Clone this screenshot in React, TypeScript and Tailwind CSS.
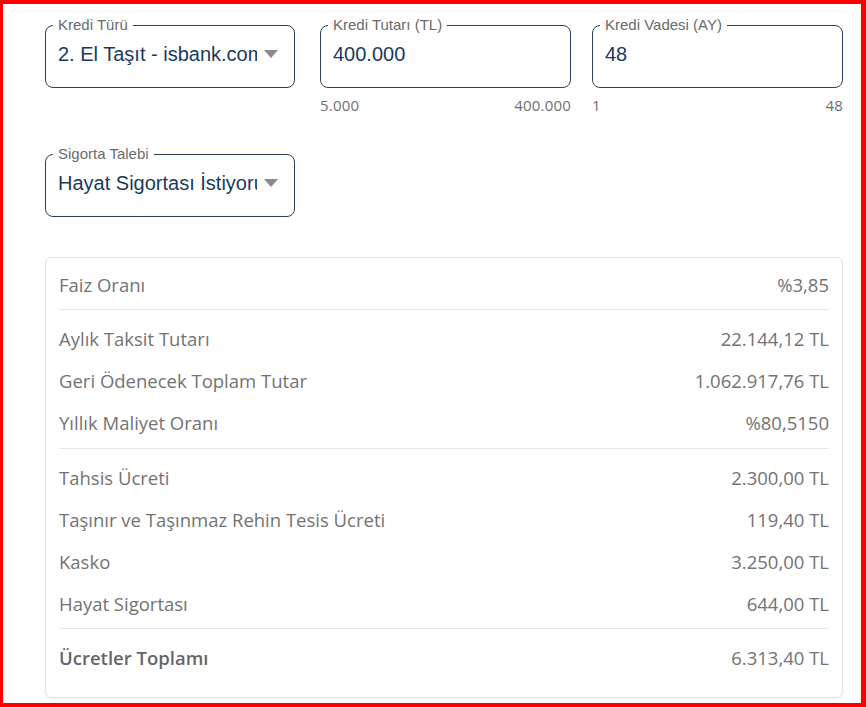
import React from 'react';

const inputFont = { fontFamily: '"Liberation Sans", Arial, sans-serif' };

function Field({
  label,
  value,
  select,
  className = '',
}: {
  label: string;
  value: string;
  select?: boolean;
  className?: string;
}) {
  return (
    <div
      className={`relative h-[63px] rounded-[8px] border border-[#2b4058] bg-white ${className}`}
    >
      <span className="absolute -top-[10px] left-[7px] bg-white px-[5px] text-[15px] leading-[18px] text-[#6b6b6b]">
        {label}
      </span>
      <div className="flex h-full items-start pt-[16px] pl-[12px] pr-[16px]">
        <span className="min-w-0 flex-1 overflow-hidden whitespace-nowrap text-[20px] leading-[24px] text-[#1b3a5e]">
          {value}
        </span>
        {select && (
          <svg
            width="14"
            height="8"
            viewBox="0 0 14 8"
            className="mt-[8px] ml-[7px] shrink-0"
          >
            <path d="M0 0 L14 0 L7 8 Z" fill="#8a8a8a" />
          </svg>
        )}
      </div>
    </div>
  );
}

function Range({ min, max }: { min: string; max: string }) {
  return (
    <div
      className="mt-[8px] flex justify-between text-[15px] leading-[18px] tracking-[0.2px] text-[#707070]"
      style={{ fontFamily: '"Open Sans", "Liberation Sans", sans-serif' }}
    >
      <span>{min}</span>
      <span>{max}</span>
    </div>
  );
}

function Row({ label, value, bold }: { label: string; value: string; bold?: boolean }) {
  return (
    <div className="flex h-[42px] items-center justify-between">
      <span
        className={
          bold ? 'font-semibold text-[#666666]' : 'text-[#737373]'
        }
      >
        {label}
      </span>
      <span className="text-[#737373]">{value}</span>
    </div>
  );
}

export default function App() {
  return (
    <div
      className="box-border h-[707px] w-[866px] border-t-4 border-r-[5px] border-b-4 border-l-[3px] border-[#ff0000] bg-white"
      style={inputFont}
    >
      <div className="h-full border-r border-[#efefef] pt-[21px] pl-[42px]">
        {/* top row */}
        <div className="flex items-start">
          <div className="w-[250px]">
            <Field label="Kredi Türü" value="2. El Taşıt - isbank.com" select />
          </div>
          <div className="ml-[25px] w-[251px]">
            <Field label="Kredi Tutarı (TL)" value="400.000" />
            <Range min="5.000" max="400.000" />
          </div>
          <div className="ml-[21px] w-[251px]">
            <Field label="Kredi Vadesi (AY)" value="48" />
            <Range min="1" max="48" />
          </div>
        </div>

        <div className="mt-[40px] w-[250px]">
          <Field label="Sigorta Talebi" value="Hayat Sigortası İstiyorum" select />
        </div>

        {/* summary card */}
        <div
          className="mt-[40px] w-[798px] rounded-[6px] border border-[#e3e3e3] bg-white px-[13px] text-[18.5px] shadow-[0_1px_2px_rgba(0,0,0,0.04)]"
          style={{ fontFamily: '"Open Sans", "Liberation Sans", sans-serif' }}
        >
          <div className="pt-[6px] pb-[3px]">
            <Row label="Faiz Oranı" value="%3,85" />
          </div>
          <div className="border-t border-[#e8e8e8] pt-[8px] pb-[4px]">
            <Row label="Aylık Taksit Tutarı" value="22.144,12 TL" />
            <Row label="Geri Ödenecek Toplam Tutar" value="1.062.917,76 TL" />
            <Row label="Yıllık Maliyet Oranı" value="%80,5150" />
          </div>
          <div className="border-t border-[#e8e8e8] pt-[8px] pb-[3px]">
            <Row label="Tahsis Ücreti" value="2.300,00 TL" />
            <Row label="Taşınır ve Taşınmaz Rehin Tesis Ücreti" value="119,40 TL" />
            <Row label="Kasko" value="3.250,00 TL" />
            <Row label="Hayat Sigortası" value="644,00 TL" />
          </div>
          <div className="border-t border-[#e8e8e8] pt-[8px] pb-[18px]">
            <Row label="Ücretler Toplamı" value="6.313,40 TL" bold />
          </div>
        </div>
      </div>
    </div>
  );
}
